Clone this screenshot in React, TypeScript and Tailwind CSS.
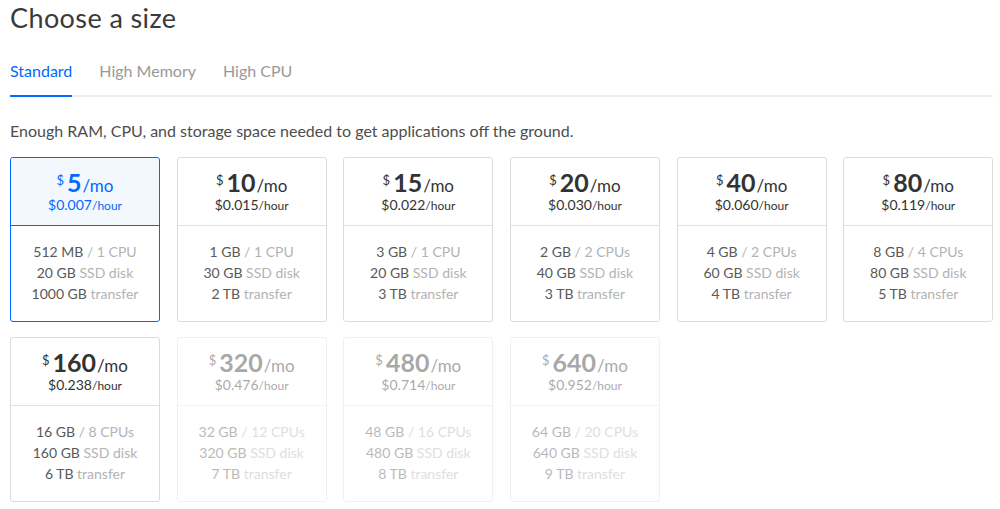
import React from "react";

type Plan = {
  mo: string;
  hr: string;
  mem: string;
  cpu: string;
  disk: string;
  transfer: string;
  selected?: boolean;
  disabled?: boolean;
};

const plans: Plan[] = [
  { mo: "5", hr: "$0.007", mem: "512 MB", cpu: "/ 1 CPU", disk: "20 GB", transfer: "1000 GB", selected: true },
  { mo: "10", hr: "$0.015", mem: "1 GB", cpu: "/ 1 CPU", disk: "30 GB", transfer: "2 TB" },
  { mo: "15", hr: "$0.022", mem: "3 GB", cpu: "/ 1 CPU", disk: "20 GB", transfer: "3 TB" },
  { mo: "20", hr: "$0.030", mem: "2 GB", cpu: "/ 2 CPUs", disk: "40 GB", transfer: "3 TB" },
  { mo: "40", hr: "$0.060", mem: "4 GB", cpu: "/ 2 CPUs", disk: "60 GB", transfer: "4 TB" },
  { mo: "80", hr: "$0.119", mem: "8 GB", cpu: "/ 4 CPUs", disk: "80 GB", transfer: "5 TB" },
  { mo: "160", hr: "$0.238", mem: "16 GB", cpu: "/ 8 CPUs", disk: "160 GB", transfer: "6 TB" },
  { mo: "320", hr: "$0.476", mem: "32 GB", cpu: "/ 12 CPUs", disk: "320 GB", transfer: "7 TB", disabled: true },
  { mo: "480", hr: "$0.714", mem: "48 GB", cpu: "/ 16 CPUs", disk: "480 GB", transfer: "8 TB", disabled: true },
  { mo: "640", hr: "$0.952", mem: "64 GB", cpu: "/ 20 CPUs", disk: "640 GB", transfer: "9 TB", disabled: true },
];

function Card({ p }: { p: Plan }) {
  const sel = p.selected;
  return (
    <div
      className={
        "flex flex-col h-[165px] rounded-[3px] border " +
        (sel ? "border-[#0069ff] " : "border-[#dcdcdc] ") +
        (p.disabled ? "opacity-[0.42]" : "")
      }
    >
      <div
        className={
          "h-[68px] flex flex-col items-center pt-[11px] rounded-t-[3px] border-b " +
          (sel ? "bg-[#f3f8ff] border-[#0069ff] text-[#0069ff]" : "border-[#e2e2e2] text-[#333333]")
        }
      >
        <div className="flex items-baseline leading-[26px]">
          <span className="text-[13px] self-start leading-[18px] mr-[3px] mt-[2px]">$</span>
          <span className="text-[25px] font-bold">{p.mo}</span>
          <span className="text-[17px] ml-[1px]">/mo</span>
        </div>
        <div className="flex items-baseline leading-[18px] -mt-[3px]">
          <span className="text-[14px]">{p.hr}</span>
          <span className="text-[12px]">/hour</span>
        </div>
      </div>
      <div className="flex-1 flex flex-col items-center justify-center pb-[2px] text-[14px] leading-[21px] text-[#595959]">
        <div>
          {p.mem} <span className="text-[#b3b3b3]">{p.cpu}</span>
        </div>
        <div>
          {p.disk} <span className="text-[#b3b3b3]">SSD disk</span>
        </div>
        <div>
          {p.transfer} <span className="text-[#b3b3b3]">transfer</span>
        </div>
      </div>
    </div>
  );
}

export default function App() {
  return (
    <div
      className="w-[1000px] h-[509px] bg-white px-[10px] overflow-hidden"
      style={{ fontFamily: "Lato, 'Open Sans', sans-serif" }}
    >
      <h1 className="text-[27px] leading-[36px] tracking-[0.4px] text-[#3a3a3a] font-normal">Choose a size</h1>
      <div className="mt-[25px] flex gap-[27px] border-b-2 border-[#eeeeee] w-[983px] text-[16px] leading-[20px]">
        <div className="text-[#0069ff] border-b-2 border-[#0069ff] -mb-[2px] pb-[14px]">Standard</div>
        <div className="text-[#999999] pb-[14px]">High Memory</div>
        <div className="text-[#999999] pb-[14px]">High CPU</div>
      </div>
      <p className="mt-[24px] text-[16px] leading-[20px] text-[#4d4d4d]">
        Enough RAM, CPU, and storage space needed to get applications off the ground.
      </p>
      <div className="mt-[16px] grid grid-cols-[repeat(6,150px)] gap-x-[16.67px] gap-y-[15px]">
        {plans.map((p) => (
          <Card key={p.mo} p={p} />
        ))}
      </div>
    </div>
  );
}
